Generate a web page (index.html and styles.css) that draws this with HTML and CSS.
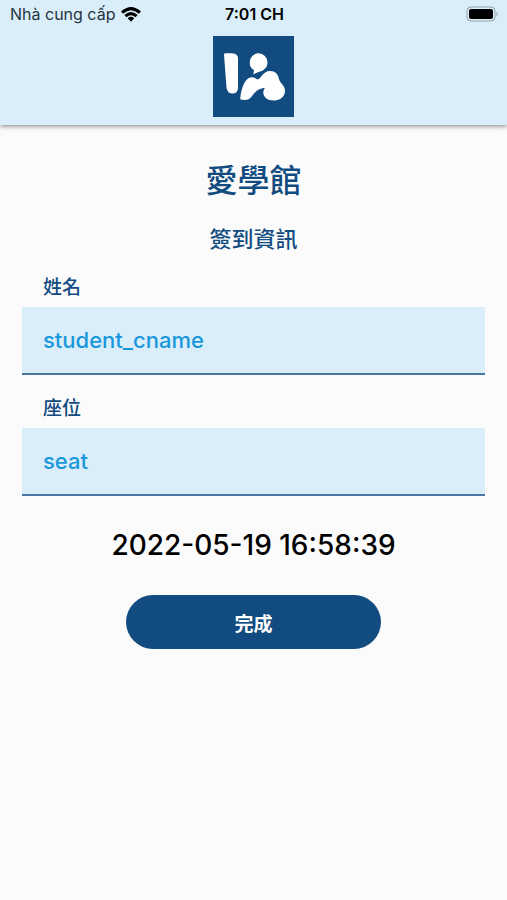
FILE: index.html
```html
<!DOCTYPE html>
<html lang="zh-Hant">
<head>
<meta charset="utf-8">
<meta name="viewport" content="width=device-width, initial-scale=1">
<title>愛學館</title>
<link rel="stylesheet" href="styles.css">
</head>
<body>
<header class="top">
  <div class="status">
    <div class="carrier">
      <span lang="vi">Nhà cung cấp</span>
      <svg class="wifi" viewBox="0 0 20 15" aria-hidden="true">
        <path d="M0 4.600Q10-4.400 20 4.600L17.900 6.800Q10-.4 2.100 6.800Z"/>
        <path d="M3.400 8Q10 2 16.600 8L14.500 10.200Q10 6.200 5.500 10.200Z"/>
        <path d="M6.700 11.300Q10 8.400 13.300 11.300L10 14.800Z"/>
      </svg>
    </div>
    <time class="clock">7:01 CH</time>
    <svg class="battery" viewBox="0 0 33 16" aria-hidden="true">
      <rect class="shell" x="1" y="1" width="28" height="14" rx="4"/>
      <rect x="3" y="3" width="24" height="10" rx="2"/>
      <path class="cap" d="M30.500 5.500Q33 8 30.500 10.500Z"/>
    </svg>
  </div>
  <svg class="logo" viewBox="0 0 81 81" role="img" aria-label="愛學館">
    <rect width="81" height="81"/>
    <path class="mark" d="M11 18.500Q11 17.200 12.500 17.200H19Q25 17.500 25 22.500V51.500Q25 57.500 19.500 57.500Q14.200 57.500 13.500 51.500Z"/>
    <path class="mark" d="M40.300 38.500L41 34.200C38 32.500 36.700 30 36.700 26.500A8.900 9.200 0 0 1 54.500 26.500C54.500 31 51.500 34 48 35.200Q43.500 36.500 40.300 38.500Z"/>
    <path class="mark" d="M27.300 63.500C27.500 57 29.500 49 33 44.500C36.500 40.300 40.500 40.500 44.500 43.500C48 43 50 35 57 35C62.500 35 65 38.500 66 43C67 47.500 72 49 72 55C72 60.500 67 64.500 61 64.500C54 64.500 50 60.500 50.300 56C50.500 54 51.500 53.500 51.800 51.800C47 52.500 44 54 41.500 57C38.500 60.500 37 64 32 64Z"/>
  </svg>
</header>
<main class="content">
  <h1 class="title">愛學館</h1>
  <h2 class="subtitle">簽到資訊</h2>
  <form class="form">
    <label class="label" for="name">姓名</label>
    <input class="field" id="name" type="text" value="student_cname">
    <label class="label" for="seat">座位</label>
    <input class="field" id="seat" type="text" value="seat">
    <time class="stamp" datetime="2022-05-19T16:58:39">2022-05-19 16:58:39</time>
    <button class="done" type="button">完成</button>
  </form>
</main>
</body>
</html>
```
FILE: styles.css
```css
* {
  box-sizing: border-box;
}

body {
  margin: 0;
  min-height: 100vh;
  background: #fbfbfb;
  color: #000;
  font-family: Inter, "Noto Sans CJK TC", sans-serif;
}

.top {
  display: flex;
  flex-direction: column;
  align-items: center;
  padding-bottom: 8px;
  background: #daeef9;
  box-shadow: 0 1px 5px rgba(0, 0, 0, 0.5);
}

.status {
  display: grid;
  grid-template-columns: 1fr auto 1fr;
  align-items: center;
  width: 100%;
  height: 28px;
  margin-bottom: 8px;
  padding: 0 8px 0 10px;
  font-size: 16px;
  line-height: 28px;
}

.carrier {
  display: flex;
  align-items: center;
  gap: 6px;
  color: #26343d;
}

.wifi {
  width: 20px;
  height: 15px;
  fill: #000;
}

.clock {
  font-weight: 600;
}

.battery {
  justify-self: end;
  width: 33px;
  height: 16px;
}

.battery .shell {
  fill: none;
  stroke: #94a2aa;
  stroke-width: 1;
}

.battery .cap {
  fill: #94a2aa;
}

.logo {
  width: 81px;
  height: 81px;
  fill: #114b80;
}

.logo .mark {
  fill: #fff;
}

.content {
  padding: 34px 22px;
}

.title,
.subtitle {
  margin: 0;
  color: #114b80;
  font-weight: 500;
  text-align: center;
}

.title {
  font-size: 32px;
  line-height: 44px;
}

.subtitle {
  margin-top: 20px;
  font-size: 22px;
  line-height: 32px;
}

.form {
  display: flex;
  flex-direction: column;
  margin-top: 20px;
}

.label {
  padding: 0 21px;
  color: #114b80;
  font-size: 19px;
  font-weight: 500;
  line-height: 26px;
}

.field {
  width: 100%;
  height: 68px;
  margin: 6px 0 21px;
  padding: 0 21px;
  border: 0;
  border-bottom: 2px solid #4878a2;
  border-radius: 0;
  background: #daeef9;
  color: #1997dc;
  font: inherit;
  font-size: 22px;
  font-weight: 500;
}

.stamp {
  margin-top: 12px;
  font-size: 28px;
  font-weight: 500;
  line-height: 32px;
  text-align: center;
}

.done {
  align-self: center;
  width: 55%;
  height: 54px;
  margin-top: 34px;
  border: 0;
  border-radius: 27px;
  background: #114b80;
  color: #fff;
  font: inherit;
  font-size: 19px;
  font-weight: 700;
}
```
